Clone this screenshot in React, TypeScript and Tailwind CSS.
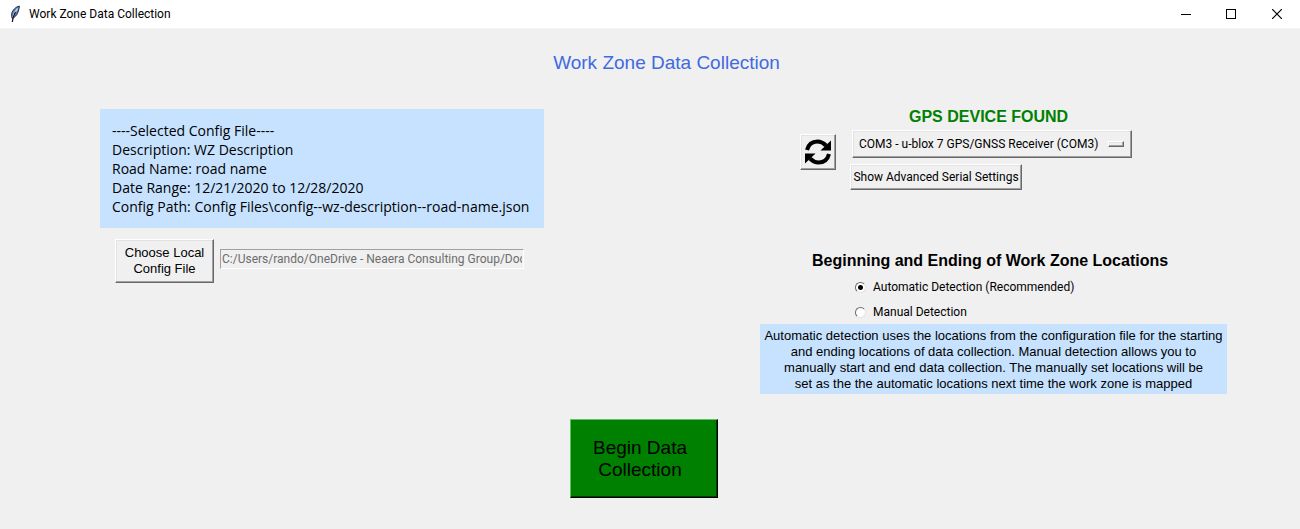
import { useState } from "react";

const raised =
  "border border-t-white border-l-white border-r-[#696969] border-b-[#696969] bg-[#f0f0f0] shadow-[inset_-1px_-1px_0_#a0a0a0,inset_1px_1px_0_#e3e3e3]";

const ui = "font-['Roboto','Open_Sans',sans-serif] text-[12px] leading-4";

function TitleBar() {
  return (
    <header className="flex h-[29px] items-center justify-between border-b border-[#f4f4f4] bg-white">
      <div className="flex items-center gap-[7px] pl-2">
        <svg width="14" height="18" viewBox="0 0 14 18" aria-hidden="true">
          <path d="M11.4 1.2C8 1.5 4.4 5 3.6 9.2L4 13.2C7.5 12.8 10.6 8 11.4 1.2Z" fill="#5b86bd" stroke="#1c2540" strokeWidth="1" />
          <path d="M9.6 3.5C7.5 6 5.5 9.5 4.8 12.5" stroke="#c5daf0" strokeWidth="1.2" fill="none" />
          <path d="M7.5 7C6 9.5 4.8 12 4.3 17" stroke="#111" strokeWidth="1.2" fill="none" />
        </svg>
        <span className={ui}>Work Zone Data Collection</span>
      </div>
      <div className="flex">
        <button aria-label="Minimize" className="flex h-7 w-[45px] items-center justify-center">
          <svg width="10" height="10" shapeRendering="crispEdges"><path d="M0 5.5H10" stroke="#000" /></svg>
        </button>
        <button aria-label="Maximize" className="flex h-7 w-[46px] items-center justify-center">
          <svg width="10" height="10" shapeRendering="crispEdges"><path d="M.5 .5H9.5V9.5H.5Z" stroke="#000" fill="none" /></svg>
        </button>
        <button aria-label="Close" className="flex h-7 w-[46px] items-center justify-center">
          <svg width="10" height="10"><path d="M0 0L10 10M10 0L0 10" stroke="#000" strokeWidth="1.2" /></svg>
        </button>
      </div>
    </header>
  );
}

function ConfigPanel() {
  return (
    <section>
      <div className="bg-[#c6e2ff] p-3 font-['Open_Sans','Noto_Sans',sans-serif] text-[14px] leading-[19px] whitespace-nowrap">
        <p>----Selected Config File----</p>
        <p>Description: WZ Description</p>
        <p>Road Name: road name</p>
        <p>Date Range: 12/21/2020 to 12/28/2020</p>
        <p>Config Path: Config Files\config--wz-description--road-name.json</p>
      </div>
      <div className="mt-[11px] flex items-start gap-1.5 pl-[15px]">
        <button className={`${raised} h-11 w-[99px] text-[13px] leading-4`}>
          Choose Local
          <br />
          Config File
        </button>
        <input
          aria-label="Config file path"
          readOnly
          value="C:/Users/rando/OneDrive - Neaera Consulting Group/Documents"
          className={`${ui} mt-2.5 h-5 w-[304px] border border-t-[#a0a0a0] border-l-[#a0a0a0] border-r-white border-b-white bg-[#f0f0f0] px-px text-[#6d6d6d] outline-none`}
        />
      </div>
    </section>
  );
}

function DevicePanel() {
  return (
    <section className="flex flex-col pl-10">
      <h2 className="pl-[109px] text-[16px] leading-5 font-bold text-[#008000]">GPS DEVICE FOUND</h2>
      <div className="flex items-start gap-3.5 pt-[3px]">
        <button aria-label="Refresh devices" className={`${raised} mt-1 flex size-9 items-center justify-center`}>
          <svg width="28" height="28" viewBox="0 0 28 28" fill="none" aria-hidden="true">
            <path d="M3 12C4.5 6 8.5 3.5 13.5 3.5C17 3.5 19.5 5 22 7.5" stroke="#000" strokeWidth="4" />
            <path d="M27 2.5V12.5H16.5Z" fill="#000" />
            <path d="M25 16C23.5 22 19.5 24.5 14.5 24.5C11 24.5 8.5 23 6 20.5" stroke="#000" strokeWidth="4" />
            <path d="M1 25.5V15.5H11.5Z" fill="#000" />
          </svg>
        </button>
        <div className="flex flex-col items-start gap-1.5">
          <div className="relative ml-0.5">
            <select
              aria-label="Serial port"
              className={`${raised} ${ui} block h-7 w-[280px] appearance-none pl-1.5`}
            >
              <option>COM3 - u-blox 7 GPS/GNSS Receiver (COM3)</option>
            </select>
            <span className={`${raised} pointer-events-none absolute top-[11px] right-2 h-1.5 w-4`} />
          </div>
          <button className={`${raised} ${ui} h-[26px] w-[172px] whitespace-nowrap`}>
            Show Advanced Serial Settings
          </button>
        </div>
      </div>
    </section>
  );
}

function DetectionPanel() {
  const [mode, setMode] = useState("auto");
  const options = [
    { id: "auto", label: "Automatic Detection (Recommended)" },
    { id: "manual", label: "Manual Detection" },
  ];
  return (
    <section className="mt-[61px]">
      <h2 className="pl-[52px] text-[16px] leading-5 font-bold">Beginning and Ending of Work Zone Locations</h2>
      <div className="flex flex-col gap-[9px] pt-2 pb-1 pl-[95px]">
        {options.map((o) => (
          <label key={o.id} className={`${ui} flex items-center gap-[7px]`}>
            <input
              type="radio"
              name="detection"
              checked={mode === o.id}
              onChange={() => setMode(o.id)}
              className="size-[11px] appearance-none rounded-full border border-t-[#696969] border-r-[#e3e3e3] border-b-[#e3e3e3] border-l-[#696969] bg-white checked:bg-[radial-gradient(circle,#000_2px,#fff_3px)]"
            />
            {o.label}
          </label>
        ))}
      </div>
      <p className="bg-[#c6e2ff] pt-1 pb-0.5 text-center text-[13px] leading-4 whitespace-nowrap">
        Automatic detection uses the locations from the configuration file for the starting
        <br />
        and ending locations of data collection. Manual detection allows you to
        <br />
        manually start and end data collection. The manually set locations will be
        <br />
        set as the the automatic locations next time the work zone is mapped
      </p>
    </section>
  );
}

export default function App() {
  return (
    <div className="min-h-screen bg-[#f0f0f0] font-['Liberation_Sans',Arial,sans-serif] text-black">
      <TitleBar />
      <main>
        <h1 className="pt-[23px] pl-[33px] text-center text-[19px] leading-[22px] text-[#4169e1]">
          Work Zone Data Collection
        </h1>
        <div className="flex items-start justify-between pt-[33px] pr-[73px] pl-[100px]">
          <div className="w-[444px] pt-0.5">
            <ConfigPanel />
          </div>
          <div className="w-[467px]">
            <DevicePanel />
            <DetectionPanel />
          </div>
        </div>
        <div className="flex justify-center pt-[25px] pr-3">
          <button className="h-[79px] w-[148px] border border-t-[#60c060] border-r-black border-b-black border-l-[#60c060] bg-[#008000] pr-2 text-[19px] leading-[22px] shadow-[inset_-1px_-1px_0_#004000]">
            Begin Data
            <br />
            Collection
          </button>
        </div>
      </main>
    </div>
  );
}
